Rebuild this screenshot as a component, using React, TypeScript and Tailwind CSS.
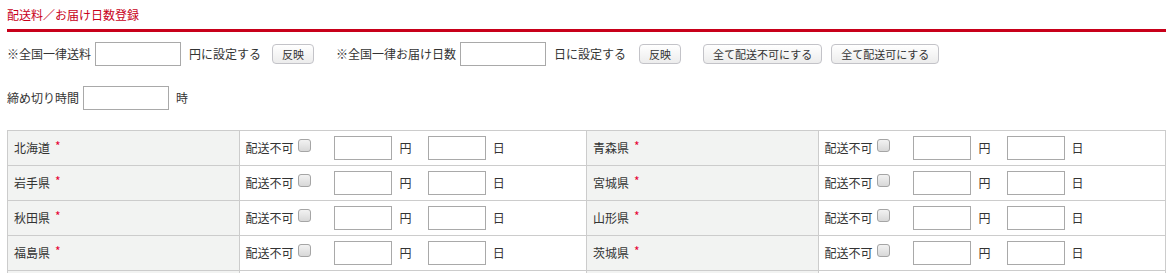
import React from 'react';

const rows: [string, string][] = [
  ['北海道', '青森県'],
  ['岩手県', '宮城県'],
  ['秋田県', '山形県'],
  ['福島県', '茨城県'],
];

const font = { fontFamily: '"Noto Sans CJK JP", "Noto Sans", sans-serif' };

const Btn = ({ label }: { label: string }) => (
  <button className="h-[20px] px-[9px] rounded-[4px] border border-[#c3c3c8] bg-gradient-to-b from-white to-[#ececec] text-[11px] leading-[18px] text-[#333]">
    {label}
  </button>
);

const TextBox = ({ w }: { w: string }) => (
  <input type="text" className={`${w} h-[24px] border border-[#a9a9a9] bg-white`} />
);

const Check = () => (
  <input
    type="checkbox"
    className="appearance-none w-[13px] h-[13px] ml-[4px] -mt-[5px] rounded-[3px] border border-[#a5a5a5] bg-gradient-to-b from-[#f2f2f2] to-[#d8d8d8]"
  />
);

const PrefHead = ({ name }: { name: string }) => (
  <td className="bg-[#f2f3f2] border border-[#cccccc] pl-[6px] h-[35px]">
    {name}
    <span className="text-[#e60033] text-[12px] ml-[5px] relative -top-[2px]">*</span>
  </td>
);

const PrefData = () => (
  <td className="border border-[#cccccc] pl-[6px] h-[35px]">
    <div className="flex items-center">
      <span>配送不可</span>
      <Check />
      <input type="text" className="ml-[23px] w-[58px] h-[24px] border border-[#a9a9a9]" />
      <span className="ml-[8px]">円</span>
      <input type="text" className="ml-[16px] w-[58px] h-[24px] border border-[#a9a9a9]" />
      <span className="ml-[7px]">日</span>
    </div>
  </td>
);

export default function App() {
  return (
    <div className="bg-white pl-[7px] pr-[6px] text-[12px] leading-[16px] text-[#333]" style={font}>
      <div className="pt-[7px] pb-[6px] border-b-[3px] border-[#c8001a] text-[#c8001a]">
        配送料／お届け日数登録
      </div>

      <div className="mt-[10px] flex items-center">
        <span>※全国一律送料</span>
        <span className="ml-[4px]"><TextBox w="w-[86px]" /></span>
        <span className="ml-[8px]">円に設定する</span>
        <span className="ml-[11px]"><Btn label="反映" /></span>
        <span className="ml-[22px]">※全国一律お届け日数</span>
        <span className="ml-[4px]"><TextBox w="w-[86px]" /></span>
        <span className="ml-[8px]">日に設定する</span>
        <span className="ml-[13px]"><Btn label="反映" /></span>
        <span className="ml-[22px]"><Btn label="全て配送不可にする" /></span>
        <span className="ml-[9px]"><Btn label="全て配送可にする" /></span>
      </div>

      <div className="mt-[20px] flex items-center">
        <span>締め切り時間</span>
        <span className="ml-[4px]"><TextBox w="w-[86px]" /></span>
        <span className="ml-[7px]">時</span>
      </div>

      <table className="mt-[20px] w-full table-fixed border-collapse">
        <colgroup>
          <col className="w-[20%]" />
          <col className="w-[30%]" />
          <col className="w-[20%]" />
          <col className="w-[30%]" />
        </colgroup>
        <tbody>
          {rows.map(([a, b]) => (
            <tr key={a}>
              <PrefHead name={a} />
              <PrefData />
              <PrefHead name={b} />
              <PrefData />
            </tr>
          ))}
          <tr>
            <td className="bg-[#f2f3f2] border border-[#cccccc] h-[35px]"></td>
            <td className="border border-[#cccccc] h-[35px]"></td>
            <td className="bg-[#f2f3f2] border border-[#cccccc] h-[35px]"></td>
            <td className="border border-[#cccccc] h-[35px]"></td>
          </tr>
        </tbody>
      </table>
    </div>
  );
}
